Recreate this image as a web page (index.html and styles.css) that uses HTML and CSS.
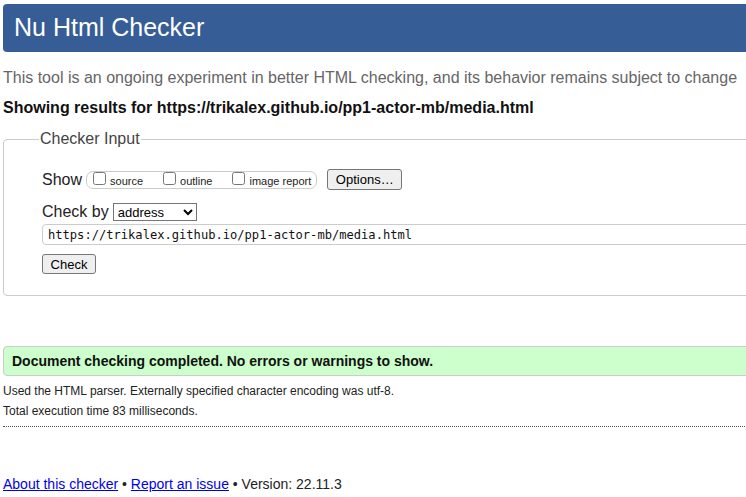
FILE: index.html
```html
<!DOCTYPE html>
<html lang="en">
<head>
<meta charset="utf-8">
<title>Nu Html Checker</title>
<link rel="stylesheet" href="styles.css">
</head>
<body>
<div class="page">
  <h1 class="banner">Nu Html Checker</h1>
  <p class="intro">This tool is an ongoing experiment in better HTML checking, and its behavior remains subject to change</p>
  <p class="showing">Showing results for https://trikalex.github.io/pp1-actor-mb/media.html</p>
  <form class="form">
    <fieldset class="checker">
      <legend class="legend">Checker Input</legend>
      <div class="row row-show">
        <span class="label">Show</span>
        <span class="group">
          <label class="opt opt-gap"><input type="checkbox" class="cb">source</label>
          <label class="opt opt-gap"><input type="checkbox" class="cb">outline</label>
          <label class="opt"><input type="checkbox" class="cb">image report</label>
        </span>
        <button type="button" class="btn btn-options">Options…</button>
      </div>
      <div class="row row-by">
        <span class="label">Check by</span>
        <select class="sel"><option>address</option></select>
      </div>
      <input class="url" type="text" value="https://trikalex.github.io/pp1-actor-mb/media.html">
      <div class="row row-check">
        <button type="button" class="btn btn-check">Check</button>
      </div>
    </fieldset>
  </form>
  <p class="success">Document checking completed. No errors or warnings to show.</p>
  <p class="details">Used the HTML parser. Externally specified character encoding was utf-8.</p>
  <p class="details">Total execution time 83 milliseconds.</p>
  <hr class="sep">
  <p class="footer"><a href="#" class="link">About this checker</a> • <a href="#" class="link">Report an issue</a> • Version: 22.11.3</p>
</div>
</body>
</html>
```
FILE: styles.css
```css
html {
  overflow: hidden;
  background: #fff;
}
body {
  margin: 0;
  font-family: "Liberation Sans", Arial, sans-serif;
  color: #222;
}
.page {
  width: 820px;
  padding: 4px 0 0 3px;
  display: flex;
  flex-direction: column;
}
.banner {
  margin: 0;
  height: 48px;
  box-sizing: border-box;
  padding: 0 0 2px 11px;
  line-height: 46px;
  font-size: 25px;
  font-weight: normal;
  color: #fff;
  background: #365d95;
  border-radius: 4px;
}
.intro {
  margin: 17px 0 0;
  font-size: 16px;
  line-height: 18px;
  color: #666;
}
.showing {
  margin: 12px 0 0;
  font-size: 16px;
  line-height: 18px;
  font-weight: bold;
  color: #111;
}
.form {
  margin: 12px 0 0;
}
.checker {
  margin: 0;
  border: 1px solid #ccc;
  border-radius: 4px;
  padding: 20px 0 21px 38px;
  min-width: 0;
}
.legend {
  padding: 0 1px;
  margin-left: -3px;
  font-size: 16px;
  line-height: 20px;
  color: #444;
}
.row {
  display: flex;
  align-items: center;
}
.row-show {
  height: 21px;
}
.row-by {
  height: 20px;
  margin-top: 12px;
}
.row-check {
  margin-top: 9px;
}
.label {
  font-size: 16px;
  line-height: 18px;
  margin-right: 4px;
  color: #222;
}
.group {
  display: inline-flex;
  align-items: center;
  height: 18px;
  box-sizing: border-box;
  border: 1px solid #ccc;
  border-radius: 7px;
  padding: 0 5px 0 6px;
}
.opt {
  display: inline-block;
  font-size: 11px;
  line-height: 13px;
  color: #222;
}
.opt-gap {
  margin-right: 20px;
}
.cb {
  margin: 0 4px 0 0;
  width: 13px;
  height: 13px;
}
.btn {
  font-family: "Liberation Sans", Arial, sans-serif;
  font-size: 13px;
  padding: 1px 6px;
  box-sizing: border-box;
  color: #000;
  background: #efefef;
  border: 1px solid #767676;
  border-radius: 3px;
}
.btn-options {
  margin-left: 10px;
  height: 21px;
  width: 75px;
}
.btn-check {
  height: 20px;
  width: 54px;
}
.sel {
  width: 84px;
  height: 18px;
  font-family: "Liberation Sans", Arial, sans-serif;
  font-size: 13px;
  padding: 0;
  border: 1px solid #767676;
  border-radius: 0;
  background: #fff;
  color: #000;
}
.url {
  display: block;
  margin: 2px 0 0;
  width: 100%;
  height: 21px;
  box-sizing: border-box;
  padding: 0 5px;
  border: 1px solid #ccc;
  border-radius: 4px;
  font-family: "DejaVu Sans Mono", monospace;
  font-size: 12.1px;
  color: #111;
}
.success {
  margin: 50px 0 0;
  padding: 6px 8px;
  font-size: 14px;
  line-height: 16px;
  font-weight: bold;
  color: #111;
  background: #ccffcc;
  border: 1px solid #ccc;
  border-radius: 4px;
}
.details {
  margin: 0;
  font-size: 12px;
  line-height: 20px;
  color: #222;
}
.success + .details {
  margin-top: 5px;
}
.sep {
  margin: 5px 0 0;
  border: 0;
  border-top: 1px dotted #555;
  height: 0;
}
.footer {
  margin: 49px 0 0;
  font-size: 14px;
  line-height: 16px;
  color: #222;
}
.link {
  color: #0000ee;
}
```
